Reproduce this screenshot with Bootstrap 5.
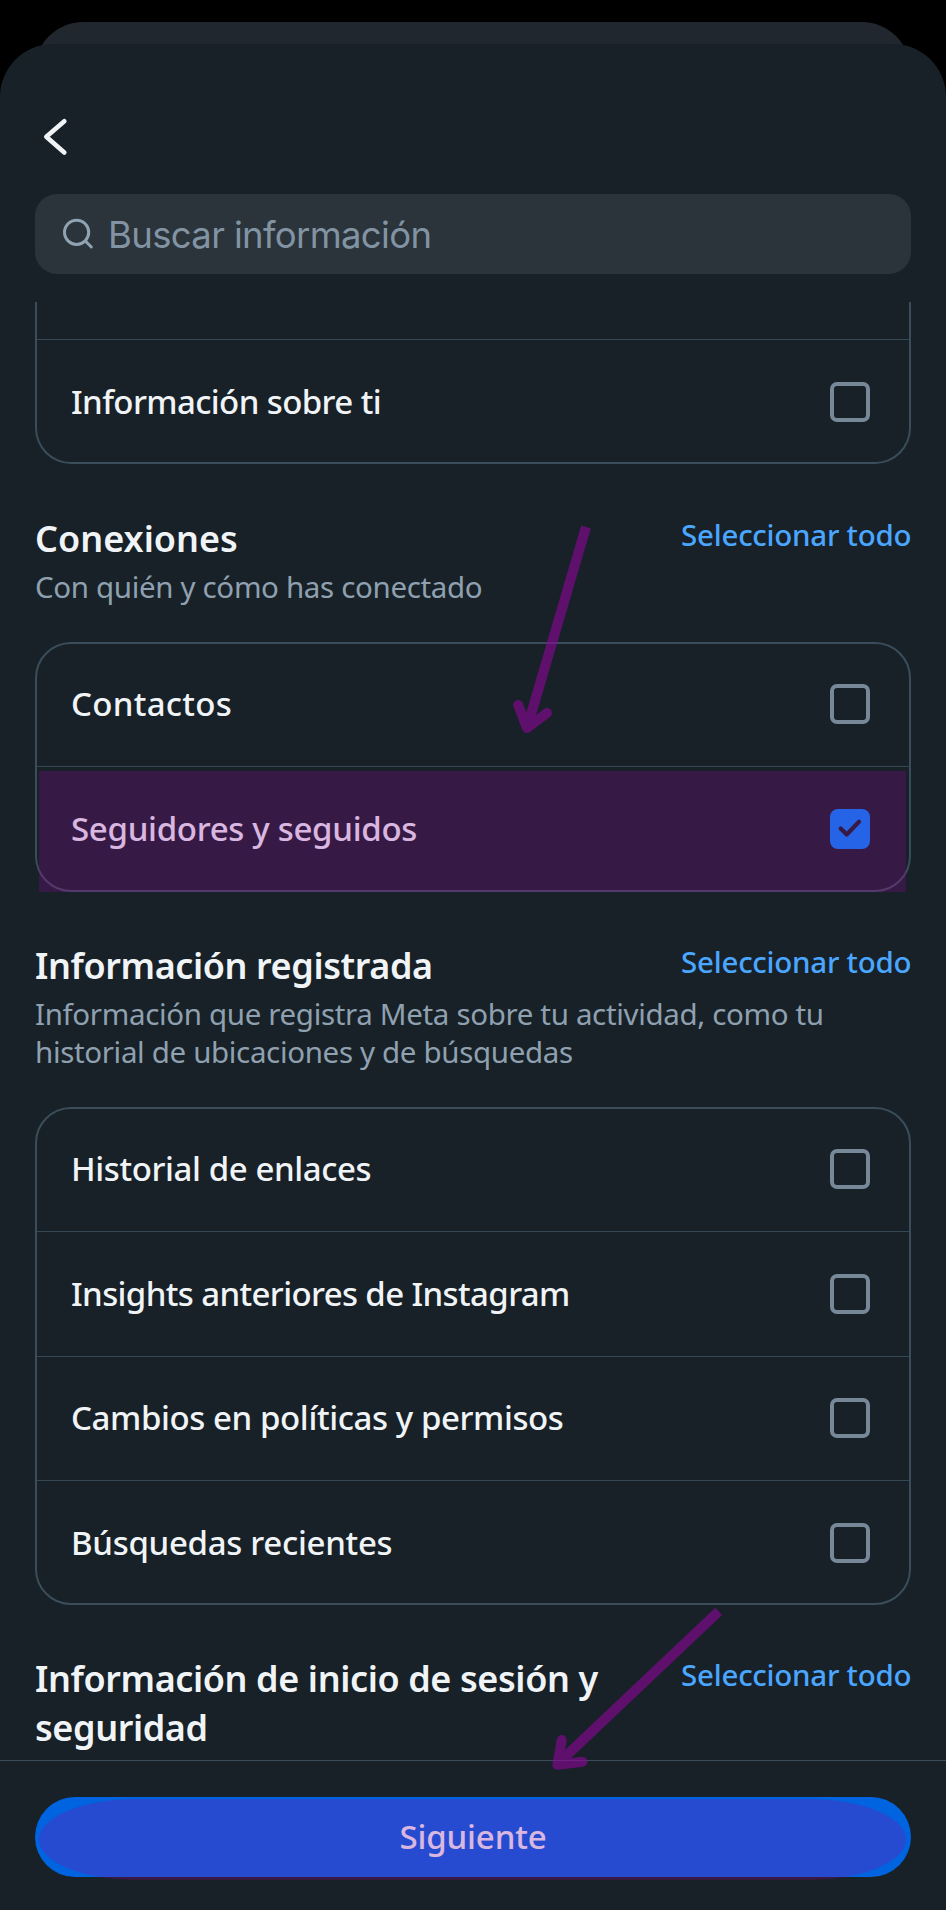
<!DOCTYPE html>
<html lang="es">
<head>
<meta charset="utf-8">
<meta name="viewport" content="width=device-width, initial-scale=1">
<title>Buscar información</title>
<link href="https://cdn.jsdelivr.net/npm/bootstrap@5.3.0/dist/css/bootstrap.min.css" rel="stylesheet">
<style>
  :root { --sheet:#172127; --line:#3b4d5a; --ink:#f1f4f7; --muted:#8fa0b0; --veil:rgba(148,2,160,.255); }
  body { background:#000; color:var(--ink); font-family:"Noto Sans",sans-serif; width:946px; height:1910px; overflow:hidden; }
  .phone { height:1910px; padding-top:22px; }
  .back-sheet { height:22px; margin:0 36px 0 35px; }
  .back-sheet::before { content:""; display:block; height:80px; background:#21272e; border-radius:48px 48px 0 0; }
  .sheet { background:var(--sheet); border-radius:53px 53px 0 0; height:1866px; z-index:1; }
  .top-bar { height:150px; padding:71px 0 0 40px; }
  .search-box { height:80px; border-radius:22px; background:#2a343a; margin:0 35px; padding:0 26px; color:#8293a3; font-family:Inter,sans-serif; font-size:36.5px; }
  .search-label { margin-left:13px; margin-top:1px; letter-spacing:-.65px; line-height:80px; }
  .scroller { height:1458px; margin-top:28px; padding:0 35px; overflow:hidden; }
  .options { border:2px solid var(--line); border-radius:36px; }
  .options.clipped { border-top:0; border-radius:0 0 36px 36px; }
  .option { height:124.4px; border-top:1px solid #364854; padding:0 39px 0 34px; font-size:33px; font-weight:500; line-height:44px; }
  .option:first-child { height:122px; border-top:0; padding-bottom:2px; }
  .option:last-child { height:123px; padding-top:2px; }
  .clipped .option:first-child { height:37px; }
  .option span { margin-top:0; }
  .box { width:40px; height:40px; border:4px solid #778899; border-radius:7px; flex:none; }
  .section-head { margin-top:48px; margin-bottom:36px; padding-top:1.5px; }
  .section-head.compact { margin-bottom:35.5px; padding-top:.5px; }
  .section-title { font-size:36px; font-weight:600; line-height:49px; margin:0; letter-spacing:-.4px; }
  .section-sub { font-size:29.5px; line-height:38.5px; color:var(--muted); margin:5px 0 0; white-space:nowrap; letter-spacing:-.34px; }
  .select-all { font-size:29.5px; line-height:38px; color:#4ba6ff; text-decoration:none; margin-top:2px; white-space:nowrap; font-weight:500; letter-spacing:-.25px; margin-right:-.25px; }
  .track-0 { letter-spacing:0; }
  .track-wide { letter-spacing:.3px; }
  .track-1 { letter-spacing:-.3px; }
  .track-2 { letter-spacing:-.4px; }
  .track-3 { letter-spacing:-.62px; }
  .track-4 { letter-spacing:-.6px; }
  .highlight { left:2px; right:3px; bottom:-2px; height:121.5px; background:var(--veil); }
  .footer-bar { border-top:1px solid #3b4d5a; padding:36px 35px 0; height:150px; }
  .next-btn { height:79.5px; border-radius:40px; background:#0064e0; border:0; color:var(--ink); font-size:33px; font-weight:500; padding:0; line-height:76px; letter-spacing:-.15px; }
  .next-veil { left:4px; right:5px; top:2px; height:81px; border-radius:98px / 40.5px; background:var(--veil); }
  .arrows { left:0; top:0; z-index:3; pointer-events:none; }
</style>
</head>
<body>
<main class="phone position-relative">
  <div class="back-sheet"></div>
  <div class="sheet position-relative d-flex flex-column">
    <header class="top-bar">
      <svg class="d-block" width="32" height="44" viewBox="0 0 32 44" fill="none" stroke="#f1f4f7" stroke-width="4.6" stroke-linecap="round" stroke-linejoin="round"><path d="M24.3 6.3 6.3 21.8l18 15.8"/></svg>
    </header>
    <div class="search-box d-flex align-items-center">
      <svg width="34" height="34" viewBox="0 0 34 34" fill="none" stroke="#91a2b3" stroke-width="3" stroke-linecap="round"><circle cx="15.6" cy="15.3" r="12.1"/><path d="m24.6 24.3 5.7 5.7"/></svg>
      <span class="search-label">Buscar información</span>
    </div>

    <div class="scroller">
      <div class="options clipped">
        <div class="option"></div>
        <div class="option d-flex align-items-center justify-content-between"><span class="track-4">Información sobre ti</span><i class="box"></i></div>
      </div>

      <section>
        <div class="section-head d-flex justify-content-between align-items-start">
          <div><h2 class="section-title track-0">Conexiones</h2><p class="section-sub">Con quién y cómo has conectado</p></div>
          <a class="select-all" href="#">Seleccionar todo</a>
        </div>
        <div class="options position-relative">
          <div class="option d-flex align-items-center justify-content-between"><span class="track-wide">Contactos</span><i class="box"></i></div>
          <div class="option d-flex align-items-center justify-content-between"><span class="track-1">Seguidores y seguidos</span>
            <svg width="40" height="40" viewBox="0 0 40 40"><rect width="40" height="40" rx="8" fill="#0086ff"/><path d="m10.7 19.5 6 6L29 12.8" fill="none" stroke="#172127" stroke-width="4.2" stroke-linecap="round" stroke-linejoin="round"/></svg>
          </div>
          <div class="highlight position-absolute"></div>
        </div>
      </section>

      <section>
        <div class="section-head compact">
          <div class="d-flex justify-content-between align-items-start">
            <h2 class="section-title">Información registrada</h2>
            <a class="select-all" href="#">Seleccionar todo</a>
          </div>
          <p class="section-sub">Información que registra Meta sobre tu actividad, como tu<br>historial de ubicaciones y de búsquedas</p>
        </div>
        <div class="options">
          <div class="option d-flex align-items-center justify-content-between"><span class="track-2">Historial de enlaces</span><i class="box"></i></div>
          <div class="option d-flex align-items-center justify-content-between"><span class="track-3">Insights anteriores de Instagram</span><i class="box"></i></div>
          <div class="option d-flex align-items-center justify-content-between"><span class="track-2">Cambios en políticas y permisos</span><i class="box"></i></div>
          <div class="option d-flex align-items-center justify-content-between"><span class="track-1">Búsquedas recientes</span><i class="box"></i></div>
        </div>
      </section>

      <section>
        <div class="section-head compact d-flex justify-content-between align-items-start">
          <h2 class="section-title">Información de inicio de sesión y<br>seguridad</h2>
          <a class="select-all" href="#">Seleccionar todo</a>
        </div>
      </section>
    </div>

    <footer class="footer-bar">
      <div class="position-relative">
        <button class="next-btn btn w-100 d-block" type="button">Siguiente</button>
        <div class="next-veil position-absolute"></div>
      </div>
    </footer>
  </div>

  <svg class="arrows position-absolute" width="946" height="1910" viewBox="0 0 946 1910" fill="none" stroke="#8f059d" stroke-width="10">
    <g opacity=".6"><path d="M586 527 527 728"/><path d="m518.2 705 8.8 23 20-15" stroke-linecap="round" stroke-linejoin="round"/></g>
    <g opacity=".6"><path d="M718.7 1611.3 557 1764.5"/><path d="m561.7 1740-4.3 24.8 25.1-3.1" stroke-linecap="round" stroke-linejoin="round"/></g>
  </svg>
</main>
<script src="https://cdn.jsdelivr.net/npm/bootstrap@5.3.0/dist/js/bootstrap.bundle.min.js"></script>
</body>
</html>
